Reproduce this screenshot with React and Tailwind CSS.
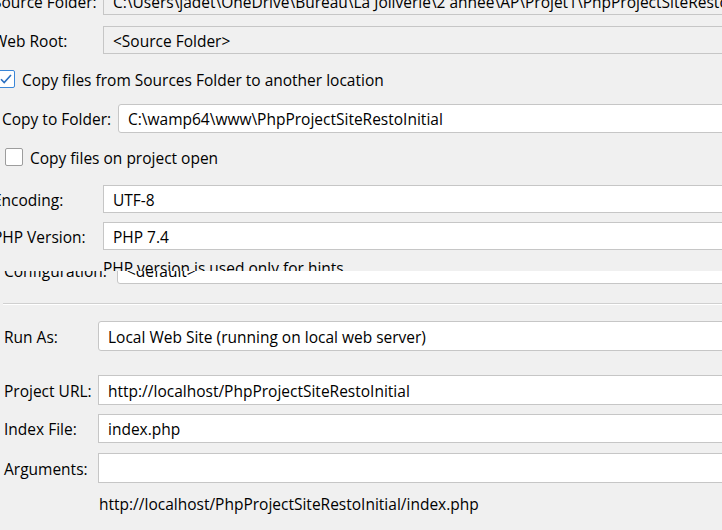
import React from "react"

function Field({ children, gray, rounded, className = "" }) {
  return (
    <div
      className={`flex-1 h-full flex items-center pl-[9px] pt-[3px] border border-[#c6c6c6] whitespace-nowrap overflow-hidden ${
        gray ? "bg-[#f0f0f0]" : "bg-white"
      } ${rounded ? "rounded-[3px]" : ""} ${className}`}
    >
      {children}
    </div>
  )
}

function TopRow({ label, children, className = "" }) {
  return (
    <div className={`flex items-center ${className}`}>
      <span className="w-[110px] -ml-[7px] pt-[3px] shrink-0 whitespace-nowrap">{label}</span>
      {children}
    </div>
  )
}

function BottomRow({ label, children, className = "" }) {
  return (
    <div className={`flex items-center ${className}`}>
      <span className="w-[94px] ml-[4px] pt-[3px] shrink-0 whitespace-nowrap">{label}</span>
      {children}
    </div>
  )
}

export default function App() {
  return (
    <div className="w-[722px] h-[530px] overflow-hidden bg-[#f0f0f0] text-black text-[15.5px] font-['Open_Sans',sans-serif]">
      <div className="w-[760px] flex flex-col -mt-[13px]">
        {/* Sources */}
        <TopRow label="Source Folder:" className="h-[28px]">
          <Field gray>C:\Users\jadet\OneDrive\Bureau\La Joliverie\2 année\AP\Projet1\PhpProjectSiteRestoInitial</Field>
        </TopRow>
        <TopRow label="Web Root:" className="h-[28px] mt-[11px]">
          <Field gray>&lt;Source Folder&gt;</Field>
        </TopRow>

        {/* Copy files */}
        <label className="flex items-center h-[18px] mt-[16px] -ml-[3px] gap-[7px]">
          <span className="w-[18px] h-[18px] bg-white border border-[#3b87d8] rounded-[2px] flex items-center justify-center">
            <svg width="14" height="14" viewBox="0 0 14 14" fill="none">
              <path d="M2 7.2l3.2 3.3L12 3" stroke="#2a6fc0" strokeWidth="1.6" />
            </svg>
          </span>
          <span className="pt-[3px] whitespace-nowrap">Copy files from Sources Folder to another location</span>
        </label>
        <div className="flex items-center h-[29px] mt-[16px]">
          <span className="w-[116px] ml-[2px] pt-[3px] shrink-0 whitespace-nowrap">Copy to Folder:</span>
          <Field rounded>C:\wamp64\www\PhpProjectSiteRestoInitial</Field>
        </div>
        <label className="flex items-center h-[18px] mt-[15px] ml-[5px] gap-[7px]">
          <span className="w-[18px] h-[18px] bg-white border border-[#9d9d9d] rounded-[2px]" />
          <span className="pt-[3px] whitespace-nowrap">Copy files on project open</span>
        </label>

        {/* Encoding / PHP */}
        <TopRow label="Encoding:" className="h-[28px] mt-[19px]">
          <Field>UTF-8</Field>
        </TopRow>
        <TopRow label="PHP Version:" className="h-[28px] mt-[9px]">
          <Field>PHP 7.4</Field>
        </TopRow>
        <div className="h-[13px] mt-[8px] overflow-hidden">
          <div className="h-[20px] pl-[103px] pt-[2px] flex items-center whitespace-nowrap">
            PHP version is used only for hints
          </div>
        </div>

        {/* Configuration (cut) */}
        <div className="h-[13px] overflow-hidden">
          <div className="flex items-center h-[28px] -mt-[15px]">
            <span className="w-[113px] ml-[4px] pt-[3px] shrink-0 whitespace-nowrap">Configuration:</span>
            <Field rounded>&lt;default&gt;</Field>
          </div>
        </div>

        <div className="mt-[19px] ml-[3px] border-t border-[#d0d0d0] border-b border-b-white" />

        {/* Run configuration */}
        <BottomRow label="Run As:" className="h-[30px] mt-[16px]">
          <Field rounded>Local Web Site (running on local web server)</Field>
        </BottomRow>
        <BottomRow label="Project URL:" className="h-[30px] mt-[24px]">
          <Field>http://localhost/PhpProjectSiteRestoInitial</Field>
        </BottomRow>
        <BottomRow label="Index File:" className="h-[29px] mt-[9px]">
          <Field>index.php</Field>
        </BottomRow>
        <BottomRow label="Arguments:" className="h-[30px] mt-[10px]">
          <Field />
        </BottomRow>
        <div className="h-[20px] mt-[10px] pl-[99px] pt-[3px] flex items-center whitespace-nowrap">
          http://localhost/PhpProjectSiteRestoInitial/index.php
        </div>
      </div>
    </div>
  )
}
